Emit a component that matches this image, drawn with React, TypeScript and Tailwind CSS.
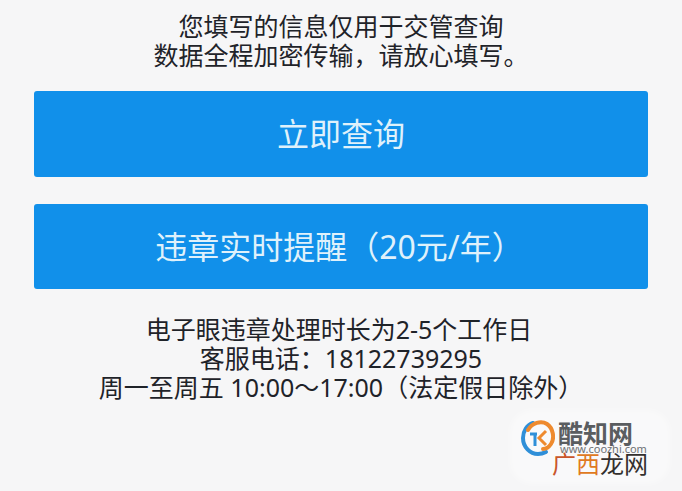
export default function App() {
  const font = { fontFamily: '"Noto Sans","Noto Sans CJK SC",sans-serif' };
  return (
    <div style={font} className="relative h-[491px] w-[682px] overflow-hidden bg-[#f6f6f7] text-[#1f2329]">
      <div className="flex flex-col items-center pt-[12px] text-[25px] leading-[29px]">
        <p>您填写的信息仅用于交管查询</p>
        <p>数据全程加密传输，请放心填写。</p>
      </div>
      <div className="mx-[34px] mt-[21px] flex flex-col gap-[27px]">
        <button className="h-[86px] rounded-[3px] bg-[#1190ea] text-[32px] text-[#dff1fb]">立即查询</button>
        <button className="h-[85px] rounded-[3px] bg-[#1190ea] pr-[3px] text-[32px] text-[#dff1fb]">违章实时提醒（20元/年）</button>
      </div>
      <div className="mt-[26px] flex flex-col items-center text-[25px] leading-[29px]">
        <p className="pr-[4px]">电子眼违章处理时长为2-5个工作日</p>
        <p>客服电话：18122739295</p>
        <p>周一至周五 10:00～17:00（法定假日除外）</p>
      </div>
      <div className="absolute left-[510px] top-[410px] h-[74px] w-[160px] rounded-[22px] bg-white/40 blur-[3px]" />
      <svg className="absolute left-[521px] top-[419px]" width="34" height="38" viewBox="0 0 34 38" fill="none">
        <path d="M12 4C6 6 2 12 2 19c0 9 7 16 15 16 3 0 6-1 8-2" stroke="#2f8fd8" strokeWidth="4" strokeLinecap="round" />
        <path d="M7 11C11 4 20 1 26 5c6 4 8 14 4 20-2 3-5 5-8 5" stroke="#ee8a2e" strokeWidth="4" strokeLinecap="round" />
        <path d="M9 15h7M14 15v12" stroke="#2f8fd8" strokeWidth="3" />
        <path d="M25 12l-7 7 7 7" stroke="#ee8a2e" strokeWidth="3" />
      </svg>
      <div className="absolute left-[558px] top-[422px] text-[25px] leading-[22px] font-bold whitespace-nowrap text-[#5a5d60]">酷知网</div>
      <div className="absolute left-[560px] top-[444px] text-[11px] leading-[9px] whitespace-nowrap text-[#6f7275]">www.coozhi.com</div>
      <div className="absolute left-[552px] top-[453px] flex text-[24px] leading-[22px] whitespace-nowrap">
        <span className="text-[#c9562b]">广</span>
        <span className="text-[#e07a22]">西</span>
        <span className="text-[#33302e]">龙网</span>
      </div>
    </div>
  );
}
